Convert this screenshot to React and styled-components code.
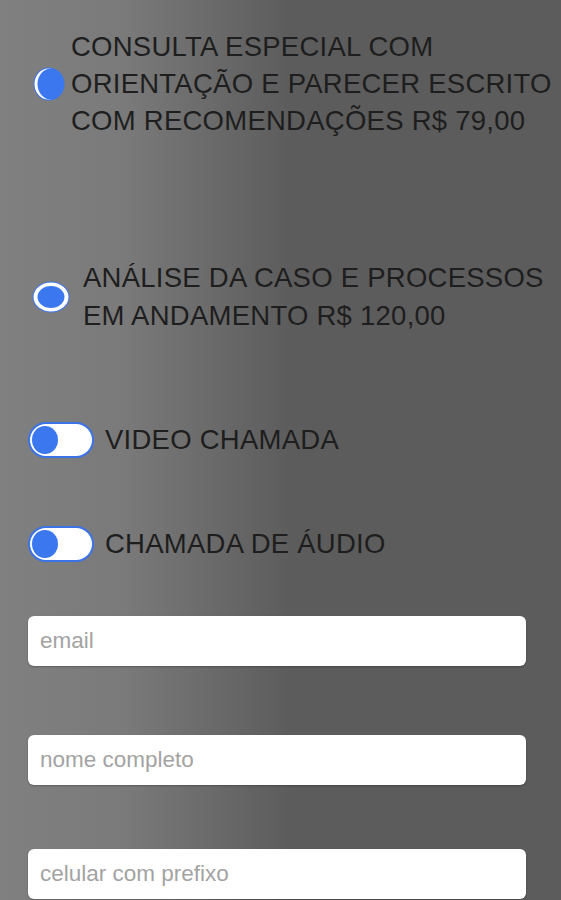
import { createGlobalStyle, styled } from "styled-components";

const GlobalStyle = createGlobalStyle`
    html, body {
        margin: 0;
        padding: 0;
    }

    body {
        font-family: "Liberation Sans", Arial, sans-serif;
        background: linear-gradient(to right, #808080 0%, #7a7a7a 22%, #5c5c5c 52%, #5c5c5c 100%);
        min-height: 100vh;
        overflow: hidden;
    }
`;

const Page = styled.div`
    width: 561px;
    height: 900px;
    display: flex;
    flex-direction: column;
    overflow: hidden;
`;

const Row = styled.div`
    display: flex;
    align-items: center;
    margin-top: ${(props) => props.$mt}px;
    padding-left: ${(props) => props.$pl}px;
    gap: ${(props) => props.$gap}px;
`;

const Label = styled.div`
    font-size: 27.5px;
    letter-spacing: 0.25px;
    line-height: ${(props) => props.$lh || 37}px;
    color: #1e1e1e;
    text-transform: uppercase;
`;

const RadioMark = styled.svg`
    flex-shrink: 0;
    display: block;
`;

const Track = styled.div`
    width: 66px;
    height: 36px;
    box-sizing: border-box;
    border: 2px solid #3b73e8;
    border-radius: 18px;
    background-color: #ffffff;
    display: flex;
    align-items: center;
    padding-left: 2px;
    flex-shrink: 0;
`;

const Knob = styled.div`
    width: 26px;
    height: 28px;
    border-radius: 50%;
    background-color: #3b78f0;
`;

const Field = styled.input`
    display: block;
    box-sizing: border-box;
    width: 498px;
    height: 50px;
    margin-top: ${(props) => props.$mt}px;
    margin-left: 28px;
    padding: 0 12px;
    border: none;
    border-radius: 6px;
    background-color: #ffffff;
    box-shadow: 0 1px 2px rgba(0, 0, 0, 0.25);
    font-family: "Liberation Sans", Arial, sans-serif;
    font-size: 22.5px;
    color: #333;
    outline: none;

    &::placeholder {
        color: #a3a3a3;
    }
`;

const CutRadio = () => (
    <RadioMark width="32" height="34" viewBox="0 0 32 34">
        <ellipse cx="15.5" cy="17" rx="15" ry="16.5" fill="#3b73e8" />
        <ellipse cx="15.5" cy="17" rx="14" ry="15.5" fill="#ffffff" />
        <ellipse cx="18" cy="17" rx="13.5" ry="15.5" fill="#3b78f0" />
    </RadioMark>
);

const Radio = () => (
    <RadioMark width="38" height="32" viewBox="0 0 38 32">
        <ellipse cx="19" cy="16" rx="18.5" ry="15.5" fill="#3b73e8" />
        <ellipse cx="19" cy="16" rx="17.5" ry="14.5" fill="#ffffff" />
        <ellipse cx="19" cy="16" rx="13.5" ry="11" fill="#3b78f0" />
    </RadioMark>
);

const Toggle = () => (
    <Track>
        <Knob />
    </Track>
);

export default function App() {
    return <Page>
        <GlobalStyle />
        <Row $mt={28} $pl={33} $gap={6}>
            <CutRadio />
            <Label>
                Consulta especial com orientação e parecer escrito com recomendações R$ 79,00
            </Label>
        </Row>
        <Row $mt={120} $pl={32} $gap={13}>
            <Radio />
            <Label $lh={38}>
                Análise da caso e processos em andamento R$ 120,00
            </Label>
        </Row>
        <Row $mt={86} $pl={28} $gap={11}>
            <Toggle />
            <Label>Video chamada</Label>
        </Row>
        <Row $mt={67} $pl={28} $gap={11}>
            <Toggle />
            <Label>Chamada de áudio</Label>
        </Row>
        <Field $mt={54} placeholder="email" />
        <Field $mt={69} placeholder="nome completo" />
        <Field $mt={64} placeholder="celular com prefixo" />
    </Page>;
}
